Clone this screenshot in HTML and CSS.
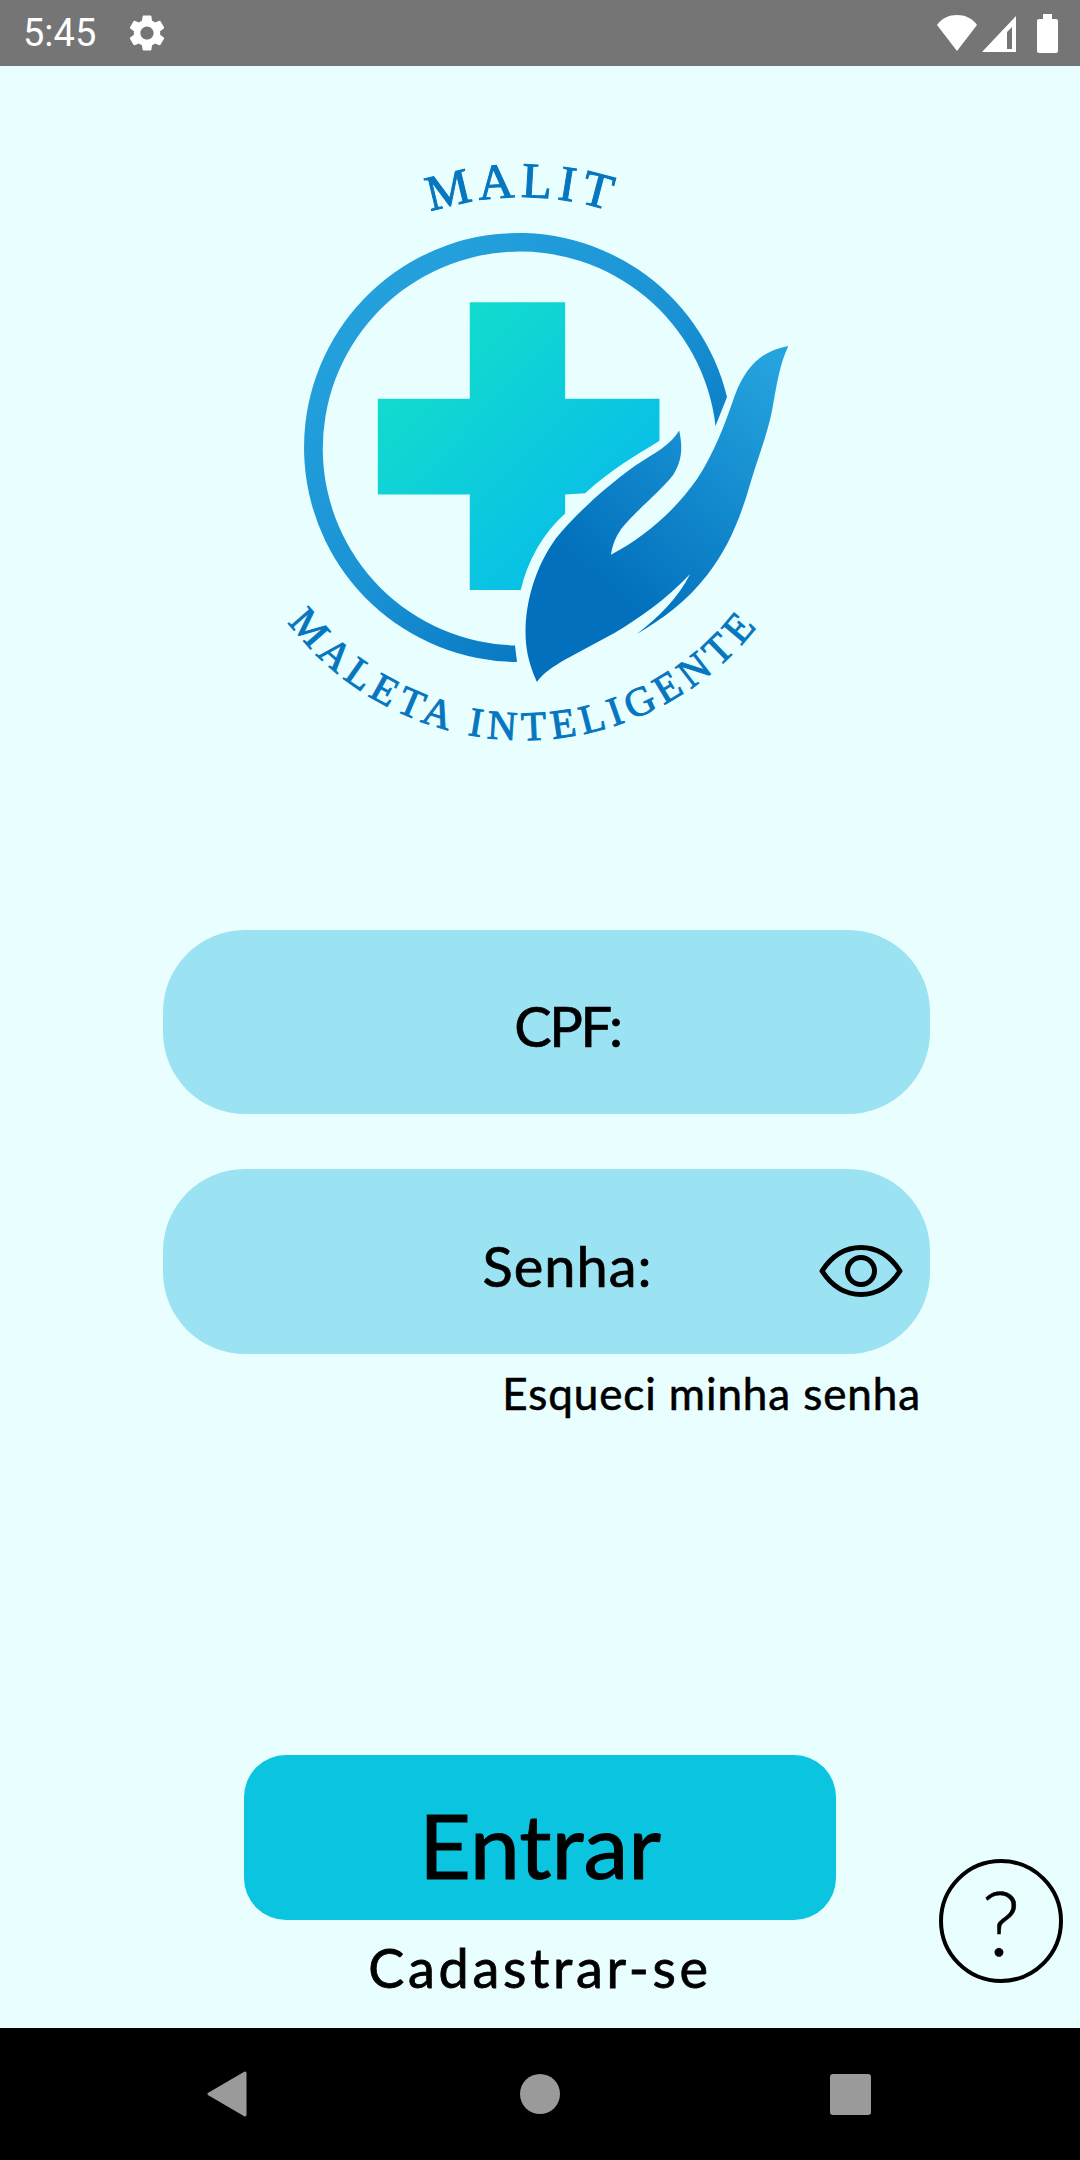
FILE: index.html
```html
<!DOCTYPE html>
<html lang="pt-BR">
<head>
<meta charset="utf-8">
<title>Malit</title>
<link rel="stylesheet" href="styles.css">
</head>
<body>
<div class="app">
  <header class="status">
    <span class="time">5:45</span>
    <svg class="gear" viewBox="0 0 24 24"><path fill="#fff" d="M19.14 12.94c.04-.3.06-.61.06-.94 0-.32-.02-.64-.07-.94l2.03-1.58c.18-.14.23-.41.12-.61l-1.92-3.32c-.12-.22-.37-.29-.59-.22l-2.39.96c-.5-.38-1.03-.7-1.62-.94l-.36-2.54c-.04-.24-.24-.41-.48-.41h-3.84c-.24 0-.43.17-.47.41l-.36 2.54c-.59.24-1.13.57-1.62.94l-2.39-.96c-.22-.08-.47 0-.59.22L2.74 8.87c-.12.21-.08.47.12.61l2.03 1.58c-.05.3-.09.63-.09.94s.02.64.07.94l-2.03 1.58c-.18.14-.23.41-.12.61l1.92 3.32c.12.22.37.29.59.22l2.39-.96c.5.38 1.03.7 1.62.94l.36 2.54c.05.24.24.41.48.41h3.84c.24 0 .44-.17.47-.41l.36-2.54c.59-.24 1.13-.56 1.62-.94l2.39.96c.22.08.47 0 .59-.22l1.92-3.32c.12-.22.07-.47-.12-.61l-2.01-1.58zM12 15.6c-1.98 0-3.6-1.62-3.6-3.6s1.62-3.6 3.6-3.6 3.6 1.62 3.6 3.6-1.62 3.6-3.6 3.6z"/></svg>
    <span class="spacer"></span>
    <svg class="sys-icons" viewBox="0 0 122 40"><path fill="#fff" d="M1 11C6 4 13 1 21 1s15 3 20 10L21 37z"/><path fill="#fff" fill-rule="evenodd" d="M46 38 80 2v36zM71 18v17h5V13z"/><rect fill="#fff" x="101" y="5" width="21" height="34" rx="2"/><rect fill="#fff" x="107" y="0" width="9" height="6"/></svg>
  </header>

  <main class="main">
    <svg class="logo" viewBox="0 0 540 600" role="img" aria-label="Malit">
      <defs>
        <linearGradient id="ring" x1="0.1" y1="0.1" x2="0.8" y2="0.9"><stop offset="0" stop-color="#25a3de"/><stop offset="0.55" stop-color="#1a92d4"/><stop offset="1" stop-color="#0270bd"/></linearGradient>
        <linearGradient id="cross" x1="0.15" y1="0.15" x2="0.85" y2="0.85"><stop offset="0" stop-color="#13dccd"/><stop offset="1" stop-color="#07bcea"/></linearGradient>
        <linearGradient id="hand" x1="0.85" y1="0" x2="0.35" y2="0.75"><stop offset="0" stop-color="#25a3de"/><stop offset="1" stop-color="#0270bd"/></linearGradient>
        <path id="arcTop" d="M152 65 A 290 290 0 0 1 352 65"/>
        <path id="arcBottom" d="M19 474 A 296 296 0 0 0 489 474"/>
      </defs>
      <path fill="url(#ring)" d="M457 247A214.500 214.500 0 1 0 247 512L245 495.500A197 197 0 1 1 445.500 276z"/>
      <g transform="scale(.34439 .38265)">
        <path fill="url(#cross)" d="M313 650H580V398H857V650H1131V760C1060 800 990 835 915 897L857 900V950C790 1005 750 1070 728 1150H580V900H313z"/>
        <path fill="url(#hand)" d="M1505 512C1480 560 1472 610 1458 680 1445 740 1415 810 1395 870 1365 965 1330 1040 1270 1110 1210 1180 1140 1225 1065 1265 1130 1220 1185 1170 1220 1108 1150 1175 1070 1225 1000 1262L860 1330C825 1348 795 1365 775 1390 750 1340 742 1300 742 1260 742 1180 770 1090 830 1015 880 960 960 890 1060 825 1120 790 1165 770 1188 733 1200 780 1195 815 1170 850 1130 895 1060 945 1020 990 1005 1010 995 1030 990 1058 1080 1015 1170 950 1240 860 1290 790 1320 720 1350 640 1385 560 1430 525 1505 512z"/>
      </g>
      <text class="logo-text logo-top"><textPath href="#arcTop" startOffset="50%" text-anchor="middle">MALIT</textPath></text>
      <text class="logo-text logo-bottom"><textPath href="#arcBottom" startOffset="50%" text-anchor="middle">MALETA INTELIGENTE</textPath></text>
    </svg>

    <section class="form">
      <div class="field"><span class="label label-cpf">CPF:</span></div>
      <div class="field field-tall">
        <span class="label label-senha">Senha:</span>
        <svg class="eye" viewBox="0 0 84 52"><path fill="none" stroke="#000" stroke-width="5" stroke-linejoin="round" d="M3 26C14 9 27 2.500 42 2.500S70 9 81 26C70 43 57 49.500 42 49.500S14 43 3 26z"/><circle fill="none" stroke="#000" stroke-width="5" cx="42" cy="26" r="13.500"/></svg>
      </div>
      <a class="forgot">Esqueci minha senha</a>
    </section>

    <section class="actions">
      <button class="enter">Entrar</button>
      <a class="signup">Cadastrar-se</a>
    </section>

    <div class="help">?</div>
  </main>

  <nav class="nav">
    <svg class="nav-back" viewBox="0 0 40 46"><path fill="#9a9a9a" stroke="#9a9a9a" stroke-width="3" stroke-linejoin="round" d="M38 2 2 23l36 21z"/></svg>
    <span class="nav-home"></span>
    <span class="nav-recent"></span>
  </nav>
</div>
</body>
</html>
```
FILE: styles.css
```css
* { box-sizing: border-box; }
html, body { margin: 0; padding: 0; }
body { font-family: Lato, "Noto Sans", sans-serif; color: #000; background: #e9ffff; }
.app { width: 1080px; height: 2160px; display: flex; flex-direction: column; overflow: hidden; }

.status { height: 66px; flex: none; background: #757575; display: flex; align-items: center; padding: 0 22px 0 23px; color: #fff; }
.time { font-family: Roboto, sans-serif; font-size: 38px; line-height: 1; }
.gear { width: 44px; height: 44px; margin-left: 29px; }
.spacer { flex: 1; }
.sys-icons { width: 122px; height: 40px; margin-top: 2px; }

.main { flex: 1; position: relative; display: flex; flex-direction: column; background: #e9ffff; }
.logo { display: block; width: 540px; height: 600px; margin: 84px 0 0 270px; flex: none; }
.logo-text { font-family: "Liberation Serif", serif; fill: #0676bf; stroke: #0676bf; stroke-width: 1px; }
.logo-top { font-size: 50px; letter-spacing: 5.500px; }
.logo-bottom { font-size: 41px; letter-spacing: 5.800px; }

.form { margin: 180px 0 0 163px; width: 767px; display: flex; flex-direction: column; gap: 55px; position: relative; }
.field { height: 184px; border-radius: 82px; background: #9be2f3; display: flex; justify-content: center; align-items: center; position: relative; padding: 8px 0 0 42px; }
.field-tall { height: 185px; }
.label { font-size: 56px; line-height: 1; -webkit-text-stroke: .7px #000; }
.label-cpf { letter-spacing: -2.500px; }
.label-senha { letter-spacing: 1px; }
.eye { position: absolute; right: 27px; top: 76px; width: 84px; height: 52px; }
.forgot { position: absolute; right: 9px; top: 437px; font-size: 44px; line-height: 1.2; white-space: nowrap; letter-spacing: .9px; -webkit-text-stroke: .6px #000; }

.actions { margin: 401px 0 0 244px; width: 592px; display: flex; flex-direction: column; align-items: center; }
.enter { width: 592px; height: 165px; border: 0; border-radius: 42px; background: #0bc4e0; color: #000; font-family: inherit; font-size: 90px; line-height: 1; padding: 12px 0 0; -webkit-text-stroke: 1px #000; }
.signup { font-size: 54px; line-height: 1.2; margin-top: 16px; letter-spacing: 3.700px; -webkit-text-stroke: .8px #000; }

.help { position: absolute; left: 939px; top: 1793px; width: 124px; height: 124px; border: 4.500px solid #000; border-radius: 50%; display: flex; align-items: center; justify-content: center; font-size: 90px; font-weight: 300; line-height: 1; -webkit-text-stroke: .5px #000; }

.nav { height: 132px; flex: none; background: #000; display: flex; align-items: center; position: relative; padding-left: 207px; }
.nav-back { width: 40px; height: 46px; flex: none; }
.nav-home { width: 40px; height: 40px; border-radius: 50%; background: #9a9a9a; margin-left: 273px; flex: none; }
.nav-recent { width: 41px; height: 41px; border-radius: 3px; background: #9a9a9a; margin-left: 270px; flex: none; }
```
